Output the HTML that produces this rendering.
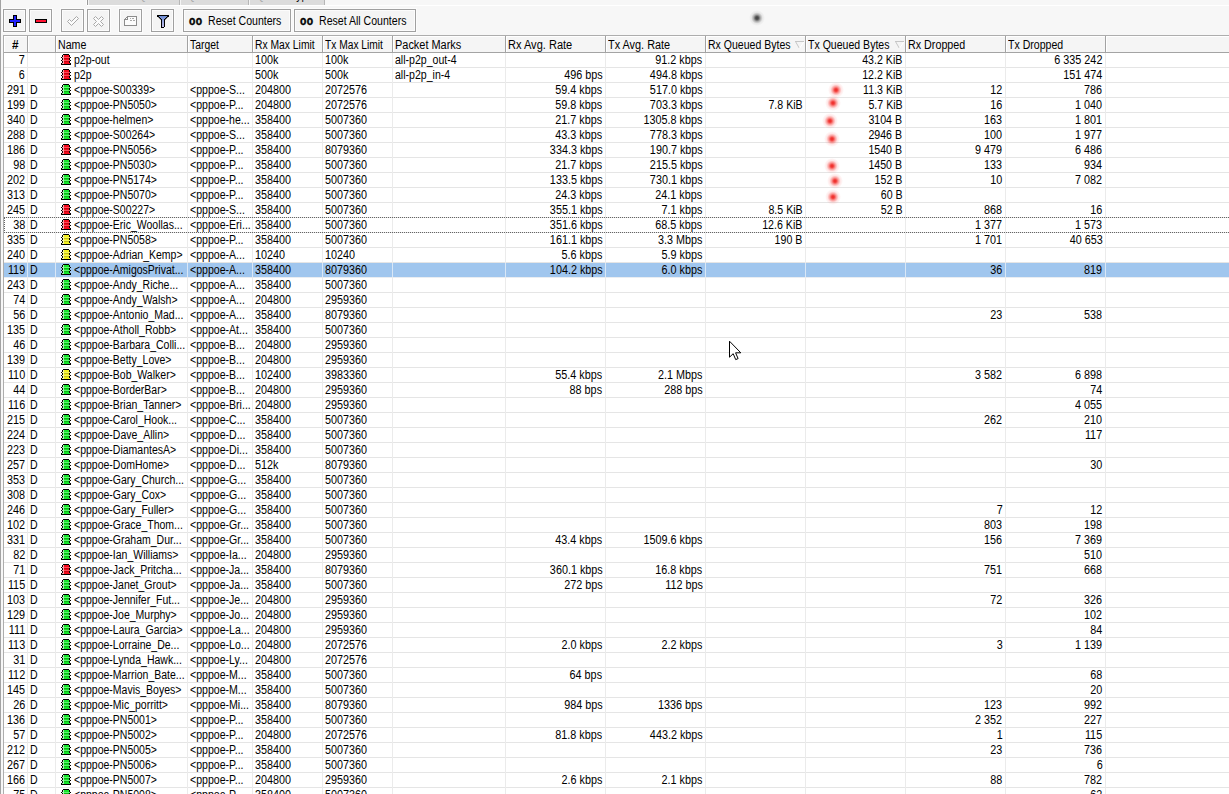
<!DOCTYPE html>
<html lang="en"><head><meta charset="utf-8"><title>Queue List</title>
<style>
*{margin:0;padding:0;box-sizing:border-box}
html,body{width:1229px;height:794px;overflow:hidden;background:#f7f7f7}
body{font-family:"Liberation Sans",sans-serif;font-size:12px;color:#000;position:relative}
#app{position:absolute;left:0;top:0;width:1229px;height:794px;overflow:hidden;background:#f7f7f7}
.edge{position:absolute;left:0;top:0;width:1px;height:794px;background:#a3a3a3}
.tabs{position:absolute;left:87px;top:0;height:5px;width:238px;background:#dcdcdc;overflow:hidden;border-left:1px solid #9a9a9a}
.tabw{position:absolute;left:86px;top:0;width:1px;height:5px;background:#fff}
.tab{position:absolute;top:-12px;height:17px;border-left:1px solid #f4f4f4;border-right:1px solid #b6b6b6;color:#111;line-height:15px;white-space:nowrap;overflow:hidden}
.hl{position:absolute;left:87px;top:5px;width:1142px;height:1px;background:#fff}
.btn{position:absolute;top:9px;height:23px;border:1px solid #a0a0a0;background:#f4f4f4;box-shadow:inset 0 0 0 1px #fcfcfc,0 0 0 1px rgba(255,255,255,.6)}
.btn svg{position:absolute;left:0;top:0}
.oo{position:absolute;left:4.9px;top:3px;font-weight:bold;font-size:13px;line-height:15px;letter-spacing:0.6px;transform:scaleX(0.8);transform-origin:0 78%;white-space:nowrap;-webkit-text-stroke:0.45px #000}
.btn .t{position:absolute;top:4px;line-height:15px;white-space:nowrap}
.sx{display:inline-block;transform:scaleX(0.88);white-space:nowrap}
.l .sx{transform-origin:0 50%}
.r .sx{transform-origin:100% 50%}
#tbl{position:absolute;left:3px;top:35px;width:1226px;height:759px;background:#fff;border-left:1px solid #adadad;border-top:1px solid #adadad}
#hdr{position:absolute;left:0;top:0;width:100%;height:17px;background:#f5f5f5;border-bottom:1px solid #a4a4a4;box-shadow:inset 0 1px 0 #fff}
.h{position:absolute;top:0;height:16px;line-height:16px;white-space:nowrap;border-right:1px solid #a2a2a2;box-shadow:inset 1px 0 0 #fff;padding-left:2px;padding-top:1px}
.vs{position:absolute;top:17px;width:1px;height:794px;background:#ebebeb}
.row{position:absolute;left:0;width:100%;height:15px;border-bottom:1px solid #e5e5e5}
.row.sel{background:#a0c6ee;border-bottom-color:#e9edf2}
.vsel{position:absolute;top:0;width:1px;height:14px;background:#d9e7f6}
.c{position:absolute;top:0;height:14px;line-height:15px;white-space:nowrap;overflow:visible}
.c.l{text-align:left}
.c.r{text-align:right}
.s0 .sx{transform:scaleX(0.9)}
.s1 .sx{transform:scaleX(0.88)}
.s2 .sx{transform:scaleX(0.875)}
.s3 .sx{transform:scaleX(0.88)}
.s4 .sx{transform:scaleX(0.9)}
.s5 .sx{transform:scaleX(0.9)}
.s6 .sx{transform:scaleX(0.88)}
.s7 .sx{transform:scaleX(0.9)}
.s8 .sx{transform:scaleX(0.9)}
.s9 .sx{transform:scaleX(0.885)}
.s10 .sx{transform:scaleX(0.885)}
.s11 .sx{transform:scaleX(0.9)}
.s12 .sx{transform:scaleX(0.9)}

.ic{position:absolute;top:1px;width:10px;height:11px}
.focus{position:absolute;pointer-events:none}
.dot{position:absolute;border-radius:50%}
</style></head>
<body><div id="app">
<div class="edge"></div>
<div class="tabs"><div class="tab l" style="left:0;width:92px"><span class="sx" style="margin-left:5px">Interface <span style="color:#aaa">Q</span>ueues</span></div><div class="tab l" style="left:92px;width:69px"><span class="sx" style="margin-left:6px"><span style="color:#aaa">Q</span>ueue Tree</span></div><div class="tab l" style="left:161px;width:76px"><span class="sx" style="margin-left:6px"><span style="color:#aaa">Q</span>ueue Types</span></div></div>
<div class="tabw"></div><div class="hl"></div>
<svg width="0" height="0" style="position:absolute"><defs><symbol id="qg" viewBox="0 0 10 11">
<path fill="#000" d="M2 0h6v1h-6zM1 1h1v2h-1zM8 1h1v2h-1zM0 3h1v1h-1zM9 3h1v1h-1zM1 4h1v2h-1zM8 4h1v2h-1zM0 6h1v1h-1zM9 6h1v1h-1zM1 7h1v2h-1zM8 7h1v2h-1zM0 9h1v1h-1zM9 9h1v1h-1zM0 10h10v1h-10z"/>
<path fill="#14e42a" d="M2 1h6v2h-6zM1 3h8v1h-8zM2 4h6v2h-6zM1 6h8v1h-8zM2 7h6v2h-6zM1 9h8v1h-8z"/>
<path fill="#62f274" d="M3 3h6v1h-6zM3 6h6v1h-6z"/>
<path fill="#06bc14" d="M3 4h5v1h-5zM3 7h5v1h-5z"/>
<path fill="#a4f6ae" d="M2 1h1v9h-1zM1 3h1v1h-1zM1 6h1v1h-1zM1 9h1v1h-1z"/>
</symbol><symbol id="qr" viewBox="0 0 10 11">
<path fill="#000" d="M2 0h6v1h-6zM1 1h1v2h-1zM8 1h1v2h-1zM0 3h1v1h-1zM9 3h1v1h-1zM1 4h1v2h-1zM8 4h1v2h-1zM0 6h1v1h-1zM9 6h1v1h-1zM1 7h1v2h-1zM8 7h1v2h-1zM0 9h1v1h-1zM9 9h1v1h-1zM0 10h10v1h-10z"/>
<path fill="#f20a1c" d="M2 1h6v2h-6zM1 3h8v1h-8zM2 4h6v2h-6zM1 6h8v1h-8zM2 7h6v2h-6zM1 9h8v1h-8z"/>
<path fill="#fb4a5a" d="M3 3h6v1h-6zM3 6h6v1h-6z"/>
<path fill="#cc0010" d="M3 4h5v1h-5zM3 7h5v1h-5z"/>
<path fill="#fda0a6" d="M2 1h1v9h-1zM1 3h1v1h-1zM1 6h1v1h-1zM1 9h1v1h-1z"/>
</symbol><symbol id="qy" viewBox="0 0 10 11">
<path fill="#000" d="M2 0h6v1h-6zM1 1h1v2h-1zM8 1h1v2h-1zM0 3h1v1h-1zM9 3h1v1h-1zM1 4h1v2h-1zM8 4h1v2h-1zM0 6h1v1h-1zM9 6h1v1h-1zM1 7h1v2h-1zM8 7h1v2h-1zM0 9h1v1h-1zM9 9h1v1h-1zM0 10h10v1h-10z"/>
<path fill="#f2f01e" d="M2 1h6v2h-6zM1 3h8v1h-8zM2 4h6v2h-6zM1 6h8v1h-8zM2 7h6v2h-6zM1 9h8v1h-8z"/>
<path fill="#f7f55c" d="M3 3h6v1h-6zM3 6h6v1h-6z"/>
<path fill="#c6c01c" d="M3 4h5v1h-5zM3 7h5v1h-5z"/>
<path fill="#fafaa4" d="M2 1h1v9h-1zM1 3h1v1h-1zM1 6h1v1h-1zM1 9h1v1h-1z"/>
</symbol></defs></svg>
<div class="btn" style="left:3px;width:23px"><svg width="21" height="21" viewBox="0 0 21 21" shape-rendering="crispEdges"><path fill="#000" d="M9 5h4v4h4v4h-4v4h-4v-4h-4v-4h4z"/><path fill="#2222ff" d="M10 6h2v4h4v2h-4v4h-2v-4h-4v-2h4z"/></svg></div>
<div class="btn" style="left:29px;width:23px"><svg width="21" height="21" viewBox="0 0 21 21" shape-rendering="crispEdges"><path fill="#000" d="M5 9h12v4h-12z"/><path fill="#ff1030" d="M6 10h10v2h-10z"/></svg></div>
<div class="btn" style="left:61px;width:23px"><svg width="21" height="21" viewBox="0 0 21 21"><path fill="#fbfbfb" stroke="#a8a8a8" stroke-width="1" d="M5.5 11.5L7.5 9.5L9.5 11.5L14.5 6.5L16.5 8.5L9.5 15.5z"/></svg></div>
<div class="btn" style="left:87px;width:23px"><svg width="21" height="21" viewBox="0 0 21 21"><path fill="#fbfbfb" stroke="#a8a8a8" stroke-width="1" d="M5.5 8.5L7.5 6.5L10.5 9.5L13.5 6.5L15.5 8.5L12.5 11.5L15.5 14.5L13.5 16.5L10.5 13.5L7.5 16.5L5.5 14.5L8.5 11.5z"/></svg></div>
<div class="btn" style="left:119px;width:23px"><svg width="21" height="21" viewBox="0 0 21 21" shape-rendering="crispEdges"><path fill="#fcfcfc" d="M7 6h10v10h-13v-7z"/><path fill="#8c8c8c" d="M7 6h10v1h-10zM16 6h1v10h-1zM4 15h13v1h-13zM4 9h1v7h-1zM4 9h4v1h-4zM7 6h1v4h-1zM5 8h1v1h-1zM6 7h1v1h-1z"/><path fill="#a8a8a8" d="M10 8h1v1h-1zM12 8h2v1h-2zM10 10h2v1h-2zM13 10h2v1h-2z"/></svg></div>
<div class="btn" style="left:151px;width:23px"><svg width="21" height="21" viewBox="0 0 21 21" shape-rendering="crispEdges"><defs><linearGradient id="fg" x1="0" y1="0" x2="0" y2="1"><stop offset="0" stop-color="#6c8cd4"/><stop offset="1" stop-color="#c4c0ea"/></linearGradient></defs><path fill="url(#fg)" d="M6 6h10v1h-1v1h-1v1h-1v1h-1v7h-2v-7h-1v-1h-1v-1h-1v-1h-1z"/><path fill="#000" d="M5 5h12v1h-12zM5 6h2v1h-2zM15 6h2v1h-2zM7 7h1v1h-1zM14 7h1v1h-1zM8 8h1v1h-1zM13 8h1v1h-1zM9 9h1v8h-1zM12 9h1v8h-1zM9 17h3v1h-3z"/><path fill="#000" fill-opacity=".45" d="M6 7h1v1h-1zM15 7h1v1h-1zM7 8h1v1h-1zM14 8h1v1h-1zM8 9h1v1h-1zM13 9h1v1h-1z"/></svg></div>
<div class="btn" style="left:183px;width:108px"><span class="oo">oo</span><div class="t l" style="left:23.5px"><span class="sx">Reset Counters</span></div></div>
<div class="btn" style="left:294px;width:122px"><span class="oo">oo</span><div class="t l" style="left:23.5px"><span class="sx">Reset All Counters</span></div></div>
<div class="dot" style="left:748.6px;top:9.5px;width:16px;height:16px;background:radial-gradient(circle closest-side,rgba(50,50,50,.95) 0,rgba(60,60,60,.85) 20%,rgba(90,90,90,.45) 45%,rgba(120,120,120,.12) 70%,rgba(128,128,128,0) 100%)"></div>
<div id="tbl">
<div class="row" style="top:17px"><div class="c r s0" style="left:0px;width:21px"><span class="sx">7</span></div><svg class="ic r" style="left:57px" shape-rendering="crispEdges"><use href="#qr"/></svg><div class="c l s2" style="left:70px"><span class="sx">p2p-out</span></div><div class="c l s4" style="left:251px"><span class="sx">100k</span></div><div class="c l s5" style="left:321px"><span class="sx">100k</span></div><div class="c l s6" style="left:391px"><span class="sx">all-p2p_out-4</span></div><div class="c r s8" style="left:602px;width:96.5px"><span class="sx">91.2 kbps</span></div><div class="c r s10" style="left:802px;width:96.5px"><span class="sx">43.2 KiB</span></div><div class="c r s12" style="left:1002px;width:96.5px"><span class="sx">6 335 242</span></div></div>
<div class="row" style="top:32px"><div class="c r s0" style="left:0px;width:21px"><span class="sx">6</span></div><svg class="ic r" style="left:57px" shape-rendering="crispEdges"><use href="#qr"/></svg><div class="c l s2" style="left:70px"><span class="sx">p2p</span></div><div class="c l s4" style="left:251px"><span class="sx">500k</span></div><div class="c l s5" style="left:321px"><span class="sx">500k</span></div><div class="c l s6" style="left:391px"><span class="sx">all-p2p_in-4</span></div><div class="c r s7" style="left:502px;width:96.5px"><span class="sx">496 bps</span></div><div class="c r s8" style="left:602px;width:96.5px"><span class="sx">494.8 kbps</span></div><div class="c r s10" style="left:802px;width:96.5px"><span class="sx">12.2 KiB</span></div><div class="c r s12" style="left:1002px;width:96.5px"><span class="sx">151 474</span></div></div>
<div class="row" style="top:47px"><div class="c r s0" style="left:0px;width:21px"><span class="sx">291</span></div><div class="c l s1" style="left:26px"><span class="sx">D</span></div><svg class="ic g" style="left:57px" shape-rendering="crispEdges"><use href="#qg"/></svg><div class="c l s2" style="left:70px"><span class="sx">&lt;pppoe-S00339&gt;</span></div><div class="c l s3" style="left:186px"><span class="sx">&lt;pppoe-S...</span></div><div class="c l s4" style="left:251px"><span class="sx">204800</span></div><div class="c l s5" style="left:321px"><span class="sx">2072576</span></div><div class="c r s7" style="left:502px;width:96.5px"><span class="sx">59.4 kbps</span></div><div class="c r s8" style="left:602px;width:96.5px"><span class="sx">517.0 kbps</span></div><div class="c r s10" style="left:802px;width:96.5px"><span class="sx">11.3 KiB</span></div><div class="c r s11" style="left:902px;width:96.5px"><span class="sx">12</span></div><div class="c r s12" style="left:1002px;width:96.5px"><span class="sx">786</span></div></div>
<div class="row" style="top:62px"><div class="c r s0" style="left:0px;width:21px"><span class="sx">199</span></div><div class="c l s1" style="left:26px"><span class="sx">D</span></div><svg class="ic g" style="left:57px" shape-rendering="crispEdges"><use href="#qg"/></svg><div class="c l s2" style="left:70px"><span class="sx">&lt;pppoe-PN5050&gt;</span></div><div class="c l s3" style="left:186px"><span class="sx">&lt;pppoe-P...</span></div><div class="c l s4" style="left:251px"><span class="sx">204800</span></div><div class="c l s5" style="left:321px"><span class="sx">2072576</span></div><div class="c r s7" style="left:502px;width:96.5px"><span class="sx">59.8 kbps</span></div><div class="c r s8" style="left:602px;width:96.5px"><span class="sx">703.3 kbps</span></div><div class="c r s9" style="left:702px;width:96.5px"><span class="sx">7.8 KiB</span></div><div class="c r s10" style="left:802px;width:96.5px"><span class="sx">5.7 KiB</span></div><div class="c r s11" style="left:902px;width:96.5px"><span class="sx">16</span></div><div class="c r s12" style="left:1002px;width:96.5px"><span class="sx">1 040</span></div></div>
<div class="row" style="top:77px"><div class="c r s0" style="left:0px;width:21px"><span class="sx">340</span></div><div class="c l s1" style="left:26px"><span class="sx">D</span></div><svg class="ic g" style="left:57px" shape-rendering="crispEdges"><use href="#qg"/></svg><div class="c l s2" style="left:70px"><span class="sx">&lt;pppoe-helmen&gt;</span></div><div class="c l s3" style="left:186px"><span class="sx">&lt;pppoe-he...</span></div><div class="c l s4" style="left:251px"><span class="sx">358400</span></div><div class="c l s5" style="left:321px"><span class="sx">5007360</span></div><div class="c r s7" style="left:502px;width:96.5px"><span class="sx">21.7 kbps</span></div><div class="c r s8" style="left:602px;width:96.5px"><span class="sx">1305.8 kbps</span></div><div class="c r s10" style="left:802px;width:96.5px"><span class="sx">3104 B</span></div><div class="c r s11" style="left:902px;width:96.5px"><span class="sx">163</span></div><div class="c r s12" style="left:1002px;width:96.5px"><span class="sx">1 801</span></div></div>
<div class="row" style="top:92px"><div class="c r s0" style="left:0px;width:21px"><span class="sx">288</span></div><div class="c l s1" style="left:26px"><span class="sx">D</span></div><svg class="ic g" style="left:57px" shape-rendering="crispEdges"><use href="#qg"/></svg><div class="c l s2" style="left:70px"><span class="sx">&lt;pppoe-S00264&gt;</span></div><div class="c l s3" style="left:186px"><span class="sx">&lt;pppoe-S...</span></div><div class="c l s4" style="left:251px"><span class="sx">358400</span></div><div class="c l s5" style="left:321px"><span class="sx">5007360</span></div><div class="c r s7" style="left:502px;width:96.5px"><span class="sx">43.3 kbps</span></div><div class="c r s8" style="left:602px;width:96.5px"><span class="sx">778.3 kbps</span></div><div class="c r s10" style="left:802px;width:96.5px"><span class="sx">2946 B</span></div><div class="c r s11" style="left:902px;width:96.5px"><span class="sx">100</span></div><div class="c r s12" style="left:1002px;width:96.5px"><span class="sx">1 977</span></div></div>
<div class="row" style="top:107px"><div class="c r s0" style="left:0px;width:21px"><span class="sx">186</span></div><div class="c l s1" style="left:26px"><span class="sx">D</span></div><svg class="ic r" style="left:57px" shape-rendering="crispEdges"><use href="#qr"/></svg><div class="c l s2" style="left:70px"><span class="sx">&lt;pppoe-PN5056&gt;</span></div><div class="c l s3" style="left:186px"><span class="sx">&lt;pppoe-P...</span></div><div class="c l s4" style="left:251px"><span class="sx">358400</span></div><div class="c l s5" style="left:321px"><span class="sx">8079360</span></div><div class="c r s7" style="left:502px;width:96.5px"><span class="sx">334.3 kbps</span></div><div class="c r s8" style="left:602px;width:96.5px"><span class="sx">190.7 kbps</span></div><div class="c r s10" style="left:802px;width:96.5px"><span class="sx">1540 B</span></div><div class="c r s11" style="left:902px;width:96.5px"><span class="sx">9 479</span></div><div class="c r s12" style="left:1002px;width:96.5px"><span class="sx">6 486</span></div></div>
<div class="row" style="top:122px"><div class="c r s0" style="left:0px;width:21px"><span class="sx">98</span></div><div class="c l s1" style="left:26px"><span class="sx">D</span></div><svg class="ic g" style="left:57px" shape-rendering="crispEdges"><use href="#qg"/></svg><div class="c l s2" style="left:70px"><span class="sx">&lt;pppoe-PN5030&gt;</span></div><div class="c l s3" style="left:186px"><span class="sx">&lt;pppoe-P...</span></div><div class="c l s4" style="left:251px"><span class="sx">358400</span></div><div class="c l s5" style="left:321px"><span class="sx">5007360</span></div><div class="c r s7" style="left:502px;width:96.5px"><span class="sx">21.7 kbps</span></div><div class="c r s8" style="left:602px;width:96.5px"><span class="sx">215.5 kbps</span></div><div class="c r s10" style="left:802px;width:96.5px"><span class="sx">1450 B</span></div><div class="c r s11" style="left:902px;width:96.5px"><span class="sx">133</span></div><div class="c r s12" style="left:1002px;width:96.5px"><span class="sx">934</span></div></div>
<div class="row" style="top:137px"><div class="c r s0" style="left:0px;width:21px"><span class="sx">202</span></div><div class="c l s1" style="left:26px"><span class="sx">D</span></div><svg class="ic g" style="left:57px" shape-rendering="crispEdges"><use href="#qg"/></svg><div class="c l s2" style="left:70px"><span class="sx">&lt;pppoe-PN5174&gt;</span></div><div class="c l s3" style="left:186px"><span class="sx">&lt;pppoe-P...</span></div><div class="c l s4" style="left:251px"><span class="sx">358400</span></div><div class="c l s5" style="left:321px"><span class="sx">5007360</span></div><div class="c r s7" style="left:502px;width:96.5px"><span class="sx">133.5 kbps</span></div><div class="c r s8" style="left:602px;width:96.5px"><span class="sx">730.1 kbps</span></div><div class="c r s10" style="left:802px;width:96.5px"><span class="sx">152 B</span></div><div class="c r s11" style="left:902px;width:96.5px"><span class="sx">10</span></div><div class="c r s12" style="left:1002px;width:96.5px"><span class="sx">7 082</span></div></div>
<div class="row" style="top:152px"><div class="c r s0" style="left:0px;width:21px"><span class="sx">313</span></div><div class="c l s1" style="left:26px"><span class="sx">D</span></div><svg class="ic g" style="left:57px" shape-rendering="crispEdges"><use href="#qg"/></svg><div class="c l s2" style="left:70px"><span class="sx">&lt;pppoe-PN5070&gt;</span></div><div class="c l s3" style="left:186px"><span class="sx">&lt;pppoe-P...</span></div><div class="c l s4" style="left:251px"><span class="sx">358400</span></div><div class="c l s5" style="left:321px"><span class="sx">5007360</span></div><div class="c r s7" style="left:502px;width:96.5px"><span class="sx">24.3 kbps</span></div><div class="c r s8" style="left:602px;width:96.5px"><span class="sx">24.1 kbps</span></div><div class="c r s10" style="left:802px;width:96.5px"><span class="sx">60 B</span></div></div>
<div class="row" style="top:167px"><div class="c r s0" style="left:0px;width:21px"><span class="sx">245</span></div><div class="c l s1" style="left:26px"><span class="sx">D</span></div><svg class="ic r" style="left:57px" shape-rendering="crispEdges"><use href="#qr"/></svg><div class="c l s2" style="left:70px"><span class="sx">&lt;pppoe-S00227&gt;</span></div><div class="c l s3" style="left:186px"><span class="sx">&lt;pppoe-S...</span></div><div class="c l s4" style="left:251px"><span class="sx">358400</span></div><div class="c l s5" style="left:321px"><span class="sx">5007360</span></div><div class="c r s7" style="left:502px;width:96.5px"><span class="sx">355.1 kbps</span></div><div class="c r s8" style="left:602px;width:96.5px"><span class="sx">7.1 kbps</span></div><div class="c r s9" style="left:702px;width:96.5px"><span class="sx">8.5 KiB</span></div><div class="c r s10" style="left:802px;width:96.5px"><span class="sx">52 B</span></div><div class="c r s11" style="left:902px;width:96.5px"><span class="sx">868</span></div><div class="c r s12" style="left:1002px;width:96.5px"><span class="sx">16</span></div></div>
<div class="row" style="top:182px"><div class="c r s0" style="left:0px;width:21px"><span class="sx">38</span></div><div class="c l s1" style="left:26px"><span class="sx">D</span></div><svg class="ic r" style="left:57px" shape-rendering="crispEdges"><use href="#qr"/></svg><div class="c l s2" style="left:70px"><span class="sx">&lt;pppoe-Eric_Woollas...</span></div><div class="c l s3" style="left:186px"><span class="sx">&lt;pppoe-Eri...</span></div><div class="c l s4" style="left:251px"><span class="sx">358400</span></div><div class="c l s5" style="left:321px"><span class="sx">5007360</span></div><div class="c r s7" style="left:502px;width:96.5px"><span class="sx">351.6 kbps</span></div><div class="c r s8" style="left:602px;width:96.5px"><span class="sx">68.5 kbps</span></div><div class="c r s9" style="left:702px;width:96.5px"><span class="sx">12.6 KiB</span></div><div class="c r s11" style="left:902px;width:96.5px"><span class="sx">1 377</span></div><div class="c r s12" style="left:1002px;width:96.5px"><span class="sx">1 573</span></div></div>
<div class="row" style="top:197px"><div class="c r s0" style="left:0px;width:21px"><span class="sx">335</span></div><div class="c l s1" style="left:26px"><span class="sx">D</span></div><svg class="ic y" style="left:57px" shape-rendering="crispEdges"><use href="#qy"/></svg><div class="c l s2" style="left:70px"><span class="sx">&lt;pppoe-PN5058&gt;</span></div><div class="c l s3" style="left:186px"><span class="sx">&lt;pppoe-P...</span></div><div class="c l s4" style="left:251px"><span class="sx">358400</span></div><div class="c l s5" style="left:321px"><span class="sx">5007360</span></div><div class="c r s7" style="left:502px;width:96.5px"><span class="sx">161.1 kbps</span></div><div class="c r s8" style="left:602px;width:96.5px"><span class="sx">3.3 Mbps</span></div><div class="c r s9" style="left:702px;width:96.5px"><span class="sx">190 B</span></div><div class="c r s11" style="left:902px;width:96.5px"><span class="sx">1 701</span></div><div class="c r s12" style="left:1002px;width:96.5px"><span class="sx">40 653</span></div></div>
<div class="row" style="top:212px"><div class="c r s0" style="left:0px;width:21px"><span class="sx">240</span></div><div class="c l s1" style="left:26px"><span class="sx">D</span></div><svg class="ic y" style="left:57px" shape-rendering="crispEdges"><use href="#qy"/></svg><div class="c l s2" style="left:70px"><span class="sx">&lt;pppoe-Adrian_Kemp&gt;</span></div><div class="c l s3" style="left:186px"><span class="sx">&lt;pppoe-A...</span></div><div class="c l s4" style="left:251px"><span class="sx">10240</span></div><div class="c l s5" style="left:321px"><span class="sx">10240</span></div><div class="c r s7" style="left:502px;width:96.5px"><span class="sx">5.6 kbps</span></div><div class="c r s8" style="left:602px;width:96.5px"><span class="sx">5.9 kbps</span></div></div>
<div class="row sel" style="top:227px"><div class="c r s0" style="left:0px;width:21px"><span class="sx">119</span></div><div class="c l s1" style="left:26px"><span class="sx">D</span></div><svg class="ic g" style="left:57px" shape-rendering="crispEdges"><use href="#qg"/></svg><div class="c l s2" style="left:70px"><span class="sx">&lt;pppoe-AmigosPrivat...</span></div><div class="c l s3" style="left:186px"><span class="sx">&lt;pppoe-A...</span></div><div class="c l s4" style="left:251px"><span class="sx">358400</span></div><div class="c l s5" style="left:321px"><span class="sx">8079360</span></div><div class="c r s7" style="left:502px;width:96.5px"><span class="sx">104.2 kbps</span></div><div class="c r s8" style="left:602px;width:96.5px"><span class="sx">6.0 kbps</span></div><div class="c r s11" style="left:902px;width:96.5px"><span class="sx">36</span></div><div class="c r s12" style="left:1002px;width:96.5px"><span class="sx">819</span></div></div>
<div class="row" style="top:242px"><div class="c r s0" style="left:0px;width:21px"><span class="sx">243</span></div><div class="c l s1" style="left:26px"><span class="sx">D</span></div><svg class="ic g" style="left:57px" shape-rendering="crispEdges"><use href="#qg"/></svg><div class="c l s2" style="left:70px"><span class="sx">&lt;pppoe-Andy_Riche...</span></div><div class="c l s3" style="left:186px"><span class="sx">&lt;pppoe-A...</span></div><div class="c l s4" style="left:251px"><span class="sx">358400</span></div><div class="c l s5" style="left:321px"><span class="sx">5007360</span></div></div>
<div class="row" style="top:257px"><div class="c r s0" style="left:0px;width:21px"><span class="sx">74</span></div><div class="c l s1" style="left:26px"><span class="sx">D</span></div><svg class="ic g" style="left:57px" shape-rendering="crispEdges"><use href="#qg"/></svg><div class="c l s2" style="left:70px"><span class="sx">&lt;pppoe-Andy_Walsh&gt;</span></div><div class="c l s3" style="left:186px"><span class="sx">&lt;pppoe-A...</span></div><div class="c l s4" style="left:251px"><span class="sx">204800</span></div><div class="c l s5" style="left:321px"><span class="sx">2959360</span></div></div>
<div class="row" style="top:272px"><div class="c r s0" style="left:0px;width:21px"><span class="sx">56</span></div><div class="c l s1" style="left:26px"><span class="sx">D</span></div><svg class="ic g" style="left:57px" shape-rendering="crispEdges"><use href="#qg"/></svg><div class="c l s2" style="left:70px"><span class="sx">&lt;pppoe-Antonio_Mad...</span></div><div class="c l s3" style="left:186px"><span class="sx">&lt;pppoe-A...</span></div><div class="c l s4" style="left:251px"><span class="sx">358400</span></div><div class="c l s5" style="left:321px"><span class="sx">8079360</span></div><div class="c r s11" style="left:902px;width:96.5px"><span class="sx">23</span></div><div class="c r s12" style="left:1002px;width:96.5px"><span class="sx">538</span></div></div>
<div class="row" style="top:287px"><div class="c r s0" style="left:0px;width:21px"><span class="sx">135</span></div><div class="c l s1" style="left:26px"><span class="sx">D</span></div><svg class="ic g" style="left:57px" shape-rendering="crispEdges"><use href="#qg"/></svg><div class="c l s2" style="left:70px"><span class="sx">&lt;pppoe-Atholl_Robb&gt;</span></div><div class="c l s3" style="left:186px"><span class="sx">&lt;pppoe-At...</span></div><div class="c l s4" style="left:251px"><span class="sx">358400</span></div><div class="c l s5" style="left:321px"><span class="sx">5007360</span></div></div>
<div class="row" style="top:302px"><div class="c r s0" style="left:0px;width:21px"><span class="sx">46</span></div><div class="c l s1" style="left:26px"><span class="sx">D</span></div><svg class="ic g" style="left:57px" shape-rendering="crispEdges"><use href="#qg"/></svg><div class="c l s2" style="left:70px"><span class="sx">&lt;pppoe-Barbara_Colli...</span></div><div class="c l s3" style="left:186px"><span class="sx">&lt;pppoe-B...</span></div><div class="c l s4" style="left:251px"><span class="sx">204800</span></div><div class="c l s5" style="left:321px"><span class="sx">2959360</span></div></div>
<div class="row" style="top:317px"><div class="c r s0" style="left:0px;width:21px"><span class="sx">139</span></div><div class="c l s1" style="left:26px"><span class="sx">D</span></div><svg class="ic g" style="left:57px" shape-rendering="crispEdges"><use href="#qg"/></svg><div class="c l s2" style="left:70px"><span class="sx">&lt;pppoe-Betty_Love&gt;</span></div><div class="c l s3" style="left:186px"><span class="sx">&lt;pppoe-B...</span></div><div class="c l s4" style="left:251px"><span class="sx">204800</span></div><div class="c l s5" style="left:321px"><span class="sx">2959360</span></div></div>
<div class="row" style="top:332px"><div class="c r s0" style="left:0px;width:21px"><span class="sx">110</span></div><div class="c l s1" style="left:26px"><span class="sx">D</span></div><svg class="ic y" style="left:57px" shape-rendering="crispEdges"><use href="#qy"/></svg><div class="c l s2" style="left:70px"><span class="sx">&lt;pppoe-Bob_Walker&gt;</span></div><div class="c l s3" style="left:186px"><span class="sx">&lt;pppoe-B...</span></div><div class="c l s4" style="left:251px"><span class="sx">102400</span></div><div class="c l s5" style="left:321px"><span class="sx">3983360</span></div><div class="c r s7" style="left:502px;width:96.5px"><span class="sx">55.4 kbps</span></div><div class="c r s8" style="left:602px;width:96.5px"><span class="sx">2.1 Mbps</span></div><div class="c r s11" style="left:902px;width:96.5px"><span class="sx">3 582</span></div><div class="c r s12" style="left:1002px;width:96.5px"><span class="sx">6 898</span></div></div>
<div class="row" style="top:347px"><div class="c r s0" style="left:0px;width:21px"><span class="sx">44</span></div><div class="c l s1" style="left:26px"><span class="sx">D</span></div><svg class="ic g" style="left:57px" shape-rendering="crispEdges"><use href="#qg"/></svg><div class="c l s2" style="left:70px"><span class="sx">&lt;pppoe-BorderBar&gt;</span></div><div class="c l s3" style="left:186px"><span class="sx">&lt;pppoe-B...</span></div><div class="c l s4" style="left:251px"><span class="sx">204800</span></div><div class="c l s5" style="left:321px"><span class="sx">2959360</span></div><div class="c r s7" style="left:502px;width:96.5px"><span class="sx">88 bps</span></div><div class="c r s8" style="left:602px;width:96.5px"><span class="sx">288 bps</span></div><div class="c r s12" style="left:1002px;width:96.5px"><span class="sx">74</span></div></div>
<div class="row" style="top:362px"><div class="c r s0" style="left:0px;width:21px"><span class="sx">116</span></div><div class="c l s1" style="left:26px"><span class="sx">D</span></div><svg class="ic g" style="left:57px" shape-rendering="crispEdges"><use href="#qg"/></svg><div class="c l s2" style="left:70px"><span class="sx">&lt;pppoe-Brian_Tanner&gt;</span></div><div class="c l s3" style="left:186px"><span class="sx">&lt;pppoe-Bri...</span></div><div class="c l s4" style="left:251px"><span class="sx">204800</span></div><div class="c l s5" style="left:321px"><span class="sx">2959360</span></div><div class="c r s12" style="left:1002px;width:96.5px"><span class="sx">4 055</span></div></div>
<div class="row" style="top:377px"><div class="c r s0" style="left:0px;width:21px"><span class="sx">215</span></div><div class="c l s1" style="left:26px"><span class="sx">D</span></div><svg class="ic g" style="left:57px" shape-rendering="crispEdges"><use href="#qg"/></svg><div class="c l s2" style="left:70px"><span class="sx">&lt;pppoe-Carol_Hook...</span></div><div class="c l s3" style="left:186px"><span class="sx">&lt;pppoe-C...</span></div><div class="c l s4" style="left:251px"><span class="sx">358400</span></div><div class="c l s5" style="left:321px"><span class="sx">5007360</span></div><div class="c r s11" style="left:902px;width:96.5px"><span class="sx">262</span></div><div class="c r s12" style="left:1002px;width:96.5px"><span class="sx">210</span></div></div>
<div class="row" style="top:392px"><div class="c r s0" style="left:0px;width:21px"><span class="sx">224</span></div><div class="c l s1" style="left:26px"><span class="sx">D</span></div><svg class="ic g" style="left:57px" shape-rendering="crispEdges"><use href="#qg"/></svg><div class="c l s2" style="left:70px"><span class="sx">&lt;pppoe-Dave_Allin&gt;</span></div><div class="c l s3" style="left:186px"><span class="sx">&lt;pppoe-D...</span></div><div class="c l s4" style="left:251px"><span class="sx">358400</span></div><div class="c l s5" style="left:321px"><span class="sx">5007360</span></div><div class="c r s12" style="left:1002px;width:96.5px"><span class="sx">117</span></div></div>
<div class="row" style="top:407px"><div class="c r s0" style="left:0px;width:21px"><span class="sx">223</span></div><div class="c l s1" style="left:26px"><span class="sx">D</span></div><svg class="ic g" style="left:57px" shape-rendering="crispEdges"><use href="#qg"/></svg><div class="c l s2" style="left:70px"><span class="sx">&lt;pppoe-DiamantesA&gt;</span></div><div class="c l s3" style="left:186px"><span class="sx">&lt;pppoe-Di...</span></div><div class="c l s4" style="left:251px"><span class="sx">358400</span></div><div class="c l s5" style="left:321px"><span class="sx">5007360</span></div></div>
<div class="row" style="top:422px"><div class="c r s0" style="left:0px;width:21px"><span class="sx">257</span></div><div class="c l s1" style="left:26px"><span class="sx">D</span></div><svg class="ic g" style="left:57px" shape-rendering="crispEdges"><use href="#qg"/></svg><div class="c l s2" style="left:70px"><span class="sx">&lt;pppoe-DomHome&gt;</span></div><div class="c l s3" style="left:186px"><span class="sx">&lt;pppoe-D...</span></div><div class="c l s4" style="left:251px"><span class="sx">512k</span></div><div class="c l s5" style="left:321px"><span class="sx">8079360</span></div><div class="c r s12" style="left:1002px;width:96.5px"><span class="sx">30</span></div></div>
<div class="row" style="top:437px"><div class="c r s0" style="left:0px;width:21px"><span class="sx">353</span></div><div class="c l s1" style="left:26px"><span class="sx">D</span></div><svg class="ic g" style="left:57px" shape-rendering="crispEdges"><use href="#qg"/></svg><div class="c l s2" style="left:70px"><span class="sx">&lt;pppoe-Gary_Church...</span></div><div class="c l s3" style="left:186px"><span class="sx">&lt;pppoe-G...</span></div><div class="c l s4" style="left:251px"><span class="sx">358400</span></div><div class="c l s5" style="left:321px"><span class="sx">5007360</span></div></div>
<div class="row" style="top:452px"><div class="c r s0" style="left:0px;width:21px"><span class="sx">308</span></div><div class="c l s1" style="left:26px"><span class="sx">D</span></div><svg class="ic g" style="left:57px" shape-rendering="crispEdges"><use href="#qg"/></svg><div class="c l s2" style="left:70px"><span class="sx">&lt;pppoe-Gary_Cox&gt;</span></div><div class="c l s3" style="left:186px"><span class="sx">&lt;pppoe-G...</span></div><div class="c l s4" style="left:251px"><span class="sx">358400</span></div><div class="c l s5" style="left:321px"><span class="sx">5007360</span></div></div>
<div class="row" style="top:467px"><div class="c r s0" style="left:0px;width:21px"><span class="sx">246</span></div><div class="c l s1" style="left:26px"><span class="sx">D</span></div><svg class="ic g" style="left:57px" shape-rendering="crispEdges"><use href="#qg"/></svg><div class="c l s2" style="left:70px"><span class="sx">&lt;pppoe-Gary_Fuller&gt;</span></div><div class="c l s3" style="left:186px"><span class="sx">&lt;pppoe-G...</span></div><div class="c l s4" style="left:251px"><span class="sx">358400</span></div><div class="c l s5" style="left:321px"><span class="sx">5007360</span></div><div class="c r s11" style="left:902px;width:96.5px"><span class="sx">7</span></div><div class="c r s12" style="left:1002px;width:96.5px"><span class="sx">12</span></div></div>
<div class="row" style="top:482px"><div class="c r s0" style="left:0px;width:21px"><span class="sx">102</span></div><div class="c l s1" style="left:26px"><span class="sx">D</span></div><svg class="ic g" style="left:57px" shape-rendering="crispEdges"><use href="#qg"/></svg><div class="c l s2" style="left:70px"><span class="sx">&lt;pppoe-Grace_Thom...</span></div><div class="c l s3" style="left:186px"><span class="sx">&lt;pppoe-Gr...</span></div><div class="c l s4" style="left:251px"><span class="sx">358400</span></div><div class="c l s5" style="left:321px"><span class="sx">5007360</span></div><div class="c r s11" style="left:902px;width:96.5px"><span class="sx">803</span></div><div class="c r s12" style="left:1002px;width:96.5px"><span class="sx">198</span></div></div>
<div class="row" style="top:497px"><div class="c r s0" style="left:0px;width:21px"><span class="sx">331</span></div><div class="c l s1" style="left:26px"><span class="sx">D</span></div><svg class="ic g" style="left:57px" shape-rendering="crispEdges"><use href="#qg"/></svg><div class="c l s2" style="left:70px"><span class="sx">&lt;pppoe-Graham_Dur...</span></div><div class="c l s3" style="left:186px"><span class="sx">&lt;pppoe-Gr...</span></div><div class="c l s4" style="left:251px"><span class="sx">358400</span></div><div class="c l s5" style="left:321px"><span class="sx">5007360</span></div><div class="c r s7" style="left:502px;width:96.5px"><span class="sx">43.4 kbps</span></div><div class="c r s8" style="left:602px;width:96.5px"><span class="sx">1509.6 kbps</span></div><div class="c r s11" style="left:902px;width:96.5px"><span class="sx">156</span></div><div class="c r s12" style="left:1002px;width:96.5px"><span class="sx">7 369</span></div></div>
<div class="row" style="top:512px"><div class="c r s0" style="left:0px;width:21px"><span class="sx">82</span></div><div class="c l s1" style="left:26px"><span class="sx">D</span></div><svg class="ic g" style="left:57px" shape-rendering="crispEdges"><use href="#qg"/></svg><div class="c l s2" style="left:70px"><span class="sx">&lt;pppoe-Ian_Williams&gt;</span></div><div class="c l s3" style="left:186px"><span class="sx">&lt;pppoe-Ia...</span></div><div class="c l s4" style="left:251px"><span class="sx">204800</span></div><div class="c l s5" style="left:321px"><span class="sx">2959360</span></div><div class="c r s12" style="left:1002px;width:96.5px"><span class="sx">510</span></div></div>
<div class="row" style="top:527px"><div class="c r s0" style="left:0px;width:21px"><span class="sx">71</span></div><div class="c l s1" style="left:26px"><span class="sx">D</span></div><svg class="ic r" style="left:57px" shape-rendering="crispEdges"><use href="#qr"/></svg><div class="c l s2" style="left:70px"><span class="sx">&lt;pppoe-Jack_Pritcha...</span></div><div class="c l s3" style="left:186px"><span class="sx">&lt;pppoe-Ja...</span></div><div class="c l s4" style="left:251px"><span class="sx">358400</span></div><div class="c l s5" style="left:321px"><span class="sx">8079360</span></div><div class="c r s7" style="left:502px;width:96.5px"><span class="sx">360.1 kbps</span></div><div class="c r s8" style="left:602px;width:96.5px"><span class="sx">16.8 kbps</span></div><div class="c r s11" style="left:902px;width:96.5px"><span class="sx">751</span></div><div class="c r s12" style="left:1002px;width:96.5px"><span class="sx">668</span></div></div>
<div class="row" style="top:542px"><div class="c r s0" style="left:0px;width:21px"><span class="sx">115</span></div><div class="c l s1" style="left:26px"><span class="sx">D</span></div><svg class="ic g" style="left:57px" shape-rendering="crispEdges"><use href="#qg"/></svg><div class="c l s2" style="left:70px"><span class="sx">&lt;pppoe-Janet_Grout&gt;</span></div><div class="c l s3" style="left:186px"><span class="sx">&lt;pppoe-Ja...</span></div><div class="c l s4" style="left:251px"><span class="sx">358400</span></div><div class="c l s5" style="left:321px"><span class="sx">5007360</span></div><div class="c r s7" style="left:502px;width:96.5px"><span class="sx">272 bps</span></div><div class="c r s8" style="left:602px;width:96.5px"><span class="sx">112 bps</span></div></div>
<div class="row" style="top:557px"><div class="c r s0" style="left:0px;width:21px"><span class="sx">103</span></div><div class="c l s1" style="left:26px"><span class="sx">D</span></div><svg class="ic g" style="left:57px" shape-rendering="crispEdges"><use href="#qg"/></svg><div class="c l s2" style="left:70px"><span class="sx">&lt;pppoe-Jennifer_Fut...</span></div><div class="c l s3" style="left:186px"><span class="sx">&lt;pppoe-Je...</span></div><div class="c l s4" style="left:251px"><span class="sx">204800</span></div><div class="c l s5" style="left:321px"><span class="sx">2959360</span></div><div class="c r s11" style="left:902px;width:96.5px"><span class="sx">72</span></div><div class="c r s12" style="left:1002px;width:96.5px"><span class="sx">326</span></div></div>
<div class="row" style="top:572px"><div class="c r s0" style="left:0px;width:21px"><span class="sx">129</span></div><div class="c l s1" style="left:26px"><span class="sx">D</span></div><svg class="ic g" style="left:57px" shape-rendering="crispEdges"><use href="#qg"/></svg><div class="c l s2" style="left:70px"><span class="sx">&lt;pppoe-Joe_Murphy&gt;</span></div><div class="c l s3" style="left:186px"><span class="sx">&lt;pppoe-Jo...</span></div><div class="c l s4" style="left:251px"><span class="sx">204800</span></div><div class="c l s5" style="left:321px"><span class="sx">2959360</span></div><div class="c r s12" style="left:1002px;width:96.5px"><span class="sx">102</span></div></div>
<div class="row" style="top:587px"><div class="c r s0" style="left:0px;width:21px"><span class="sx">111</span></div><div class="c l s1" style="left:26px"><span class="sx">D</span></div><svg class="ic g" style="left:57px" shape-rendering="crispEdges"><use href="#qg"/></svg><div class="c l s2" style="left:70px"><span class="sx">&lt;pppoe-Laura_Garcia&gt;</span></div><div class="c l s3" style="left:186px"><span class="sx">&lt;pppoe-La...</span></div><div class="c l s4" style="left:251px"><span class="sx">204800</span></div><div class="c l s5" style="left:321px"><span class="sx">2959360</span></div><div class="c r s12" style="left:1002px;width:96.5px"><span class="sx">84</span></div></div>
<div class="row" style="top:602px"><div class="c r s0" style="left:0px;width:21px"><span class="sx">113</span></div><div class="c l s1" style="left:26px"><span class="sx">D</span></div><svg class="ic g" style="left:57px" shape-rendering="crispEdges"><use href="#qg"/></svg><div class="c l s2" style="left:70px"><span class="sx">&lt;pppoe-Lorraine_De...</span></div><div class="c l s3" style="left:186px"><span class="sx">&lt;pppoe-Lo...</span></div><div class="c l s4" style="left:251px"><span class="sx">204800</span></div><div class="c l s5" style="left:321px"><span class="sx">2072576</span></div><div class="c r s7" style="left:502px;width:96.5px"><span class="sx">2.0 kbps</span></div><div class="c r s8" style="left:602px;width:96.5px"><span class="sx">2.2 kbps</span></div><div class="c r s11" style="left:902px;width:96.5px"><span class="sx">3</span></div><div class="c r s12" style="left:1002px;width:96.5px"><span class="sx">1 139</span></div></div>
<div class="row" style="top:617px"><div class="c r s0" style="left:0px;width:21px"><span class="sx">31</span></div><div class="c l s1" style="left:26px"><span class="sx">D</span></div><svg class="ic g" style="left:57px" shape-rendering="crispEdges"><use href="#qg"/></svg><div class="c l s2" style="left:70px"><span class="sx">&lt;pppoe-Lynda_Hawk...</span></div><div class="c l s3" style="left:186px"><span class="sx">&lt;pppoe-Ly...</span></div><div class="c l s4" style="left:251px"><span class="sx">204800</span></div><div class="c l s5" style="left:321px"><span class="sx">2072576</span></div></div>
<div class="row" style="top:632px"><div class="c r s0" style="left:0px;width:21px"><span class="sx">112</span></div><div class="c l s1" style="left:26px"><span class="sx">D</span></div><svg class="ic g" style="left:57px" shape-rendering="crispEdges"><use href="#qg"/></svg><div class="c l s2" style="left:70px"><span class="sx">&lt;pppoe-Marrion_Bate...</span></div><div class="c l s3" style="left:186px"><span class="sx">&lt;pppoe-M...</span></div><div class="c l s4" style="left:251px"><span class="sx">358400</span></div><div class="c l s5" style="left:321px"><span class="sx">5007360</span></div><div class="c r s7" style="left:502px;width:96.5px"><span class="sx">64 bps</span></div><div class="c r s12" style="left:1002px;width:96.5px"><span class="sx">68</span></div></div>
<div class="row" style="top:647px"><div class="c r s0" style="left:0px;width:21px"><span class="sx">145</span></div><div class="c l s1" style="left:26px"><span class="sx">D</span></div><svg class="ic g" style="left:57px" shape-rendering="crispEdges"><use href="#qg"/></svg><div class="c l s2" style="left:70px"><span class="sx">&lt;pppoe-Mavis_Boyes&gt;</span></div><div class="c l s3" style="left:186px"><span class="sx">&lt;pppoe-M...</span></div><div class="c l s4" style="left:251px"><span class="sx">358400</span></div><div class="c l s5" style="left:321px"><span class="sx">5007360</span></div><div class="c r s12" style="left:1002px;width:96.5px"><span class="sx">20</span></div></div>
<div class="row" style="top:662px"><div class="c r s0" style="left:0px;width:21px"><span class="sx">26</span></div><div class="c l s1" style="left:26px"><span class="sx">D</span></div><svg class="ic g" style="left:57px" shape-rendering="crispEdges"><use href="#qg"/></svg><div class="c l s2" style="left:70px"><span class="sx">&lt;pppoe-Mic_porritt&gt;</span></div><div class="c l s3" style="left:186px"><span class="sx">&lt;pppoe-Mi...</span></div><div class="c l s4" style="left:251px"><span class="sx">358400</span></div><div class="c l s5" style="left:321px"><span class="sx">8079360</span></div><div class="c r s7" style="left:502px;width:96.5px"><span class="sx">984 bps</span></div><div class="c r s8" style="left:602px;width:96.5px"><span class="sx">1336 bps</span></div><div class="c r s11" style="left:902px;width:96.5px"><span class="sx">123</span></div><div class="c r s12" style="left:1002px;width:96.5px"><span class="sx">992</span></div></div>
<div class="row" style="top:677px"><div class="c r s0" style="left:0px;width:21px"><span class="sx">136</span></div><div class="c l s1" style="left:26px"><span class="sx">D</span></div><svg class="ic g" style="left:57px" shape-rendering="crispEdges"><use href="#qg"/></svg><div class="c l s2" style="left:70px"><span class="sx">&lt;pppoe-PN5001&gt;</span></div><div class="c l s3" style="left:186px"><span class="sx">&lt;pppoe-P...</span></div><div class="c l s4" style="left:251px"><span class="sx">358400</span></div><div class="c l s5" style="left:321px"><span class="sx">5007360</span></div><div class="c r s11" style="left:902px;width:96.5px"><span class="sx">2 352</span></div><div class="c r s12" style="left:1002px;width:96.5px"><span class="sx">227</span></div></div>
<div class="row" style="top:692px"><div class="c r s0" style="left:0px;width:21px"><span class="sx">57</span></div><div class="c l s1" style="left:26px"><span class="sx">D</span></div><svg class="ic g" style="left:57px" shape-rendering="crispEdges"><use href="#qg"/></svg><div class="c l s2" style="left:70px"><span class="sx">&lt;pppoe-PN5002&gt;</span></div><div class="c l s3" style="left:186px"><span class="sx">&lt;pppoe-P...</span></div><div class="c l s4" style="left:251px"><span class="sx">204800</span></div><div class="c l s5" style="left:321px"><span class="sx">2072576</span></div><div class="c r s7" style="left:502px;width:96.5px"><span class="sx">81.8 kbps</span></div><div class="c r s8" style="left:602px;width:96.5px"><span class="sx">443.2 kbps</span></div><div class="c r s11" style="left:902px;width:96.5px"><span class="sx">1</span></div><div class="c r s12" style="left:1002px;width:96.5px"><span class="sx">115</span></div></div>
<div class="row" style="top:707px"><div class="c r s0" style="left:0px;width:21px"><span class="sx">212</span></div><div class="c l s1" style="left:26px"><span class="sx">D</span></div><svg class="ic g" style="left:57px" shape-rendering="crispEdges"><use href="#qg"/></svg><div class="c l s2" style="left:70px"><span class="sx">&lt;pppoe-PN5005&gt;</span></div><div class="c l s3" style="left:186px"><span class="sx">&lt;pppoe-P...</span></div><div class="c l s4" style="left:251px"><span class="sx">358400</span></div><div class="c l s5" style="left:321px"><span class="sx">5007360</span></div><div class="c r s11" style="left:902px;width:96.5px"><span class="sx">23</span></div><div class="c r s12" style="left:1002px;width:96.5px"><span class="sx">736</span></div></div>
<div class="row" style="top:722px"><div class="c r s0" style="left:0px;width:21px"><span class="sx">267</span></div><div class="c l s1" style="left:26px"><span class="sx">D</span></div><svg class="ic g" style="left:57px" shape-rendering="crispEdges"><use href="#qg"/></svg><div class="c l s2" style="left:70px"><span class="sx">&lt;pppoe-PN5006&gt;</span></div><div class="c l s3" style="left:186px"><span class="sx">&lt;pppoe-P...</span></div><div class="c l s4" style="left:251px"><span class="sx">358400</span></div><div class="c l s5" style="left:321px"><span class="sx">5007360</span></div><div class="c r s12" style="left:1002px;width:96.5px"><span class="sx">6</span></div></div>
<div class="row" style="top:737px"><div class="c r s0" style="left:0px;width:21px"><span class="sx">166</span></div><div class="c l s1" style="left:26px"><span class="sx">D</span></div><svg class="ic g" style="left:57px" shape-rendering="crispEdges"><use href="#qg"/></svg><div class="c l s2" style="left:70px"><span class="sx">&lt;pppoe-PN5007&gt;</span></div><div class="c l s3" style="left:186px"><span class="sx">&lt;pppoe-P...</span></div><div class="c l s4" style="left:251px"><span class="sx">204800</span></div><div class="c l s5" style="left:321px"><span class="sx">2959360</span></div><div class="c r s7" style="left:502px;width:96.5px"><span class="sx">2.6 kbps</span></div><div class="c r s8" style="left:602px;width:96.5px"><span class="sx">2.1 kbps</span></div><div class="c r s11" style="left:902px;width:96.5px"><span class="sx">88</span></div><div class="c r s12" style="left:1002px;width:96.5px"><span class="sx">782</span></div></div>
<div class="row" style="top:752px"><div class="c r s0" style="left:0px;width:21px"><span class="sx">75</span></div><div class="c l s1" style="left:26px"><span class="sx">D</span></div><svg class="ic g" style="left:57px" shape-rendering="crispEdges"><use href="#qg"/></svg><div class="c l s2" style="left:70px"><span class="sx">&lt;pppoe-PN5008&gt;</span></div><div class="c l s3" style="left:186px"><span class="sx">&lt;pppoe-P...</span></div><div class="c l s4" style="left:251px"><span class="sx">358400</span></div><div class="c l s5" style="left:321px"><span class="sx">5007360</span></div><div class="c r s12" style="left:1002px;width:96.5px"><span class="sx">62</span></div></div>
<div class="vs" style="left:23px"></div>
<div class="vs" style="left:51px"></div>
<div class="vs" style="left:183px"></div>
<div class="vs" style="left:248px"></div>
<div class="vs" style="left:318px"></div>
<div class="vs" style="left:388px"></div>
<div class="vs" style="left:501px"></div>
<div class="vs" style="left:601px"></div>
<div class="vs" style="left:701px"></div>
<div class="vs" style="left:801px"></div>
<div class="vs" style="left:901px"></div>
<div class="vs" style="left:1001px"></div>
<div class="vs" style="left:1101px"></div>
<div class="vsel" style="left:23px;top:227px"></div>
<div class="vsel" style="left:51px;top:227px"></div>
<div class="vsel" style="left:183px;top:227px"></div>
<div class="vsel" style="left:248px;top:227px"></div>
<div class="vsel" style="left:318px;top:227px"></div>
<div class="vsel" style="left:388px;top:227px"></div>
<div class="vsel" style="left:501px;top:227px"></div>
<div class="vsel" style="left:601px;top:227px"></div>
<div class="vsel" style="left:701px;top:227px"></div>
<div class="vsel" style="left:801px;top:227px"></div>
<div class="vsel" style="left:901px;top:227px"></div>
<div class="vsel" style="left:1001px;top:227px"></div>
<div class="vsel" style="left:1101px;top:227px"></div>
<div id="hdr">
<div class="h l" style="left:0px;width:24px;padding-left:8px;font-weight:bold"><span class="sx" style="transform:scaleX(0.98)">#</span></div>
<div class="h l" style="left:24px;width:28px"></div>
<div class="h l" style="left:52px;width:132px"><span class="sx" style="transform:scaleX(0.887)">Name</span></div>
<div class="h l" style="left:184px;width:65px"><span class="sx" style="transform:scaleX(0.865)">Target</span></div>
<div class="h l" style="left:249px;width:70px"><span class="sx" style="transform:scaleX(0.86)">Rx Max Limit</span></div>
<div class="h l" style="left:319px;width:70px"><span class="sx" style="transform:scaleX(0.852)">Tx Max Limit</span></div>
<div class="h l" style="left:389px;width:113px"><span class="sx" style="transform:scaleX(0.912)">Packet Marks</span></div>
<div class="h l" style="left:502px;width:100px"><span class="sx" style="transform:scaleX(0.92)">Rx Avg. Rate</span></div>
<div class="h l" style="left:602px;width:100px"><span class="sx" style="transform:scaleX(0.908)">Tx Avg. Rate</span></div>
<div class="h l" style="left:702px;width:100px"><span class="sx" style="transform:scaleX(0.878)">Rx Queued Bytes</span><svg width="10" height="8" viewBox="0 0 10 8" style="position:absolute;right:0px;top:5px"><path d="M0.5 0.5L4.2 7" fill="none" stroke="#c6c6c6" stroke-width="1"/><path d="M9 0.5L4.8 7" fill="none" stroke="#fff" stroke-width="1"/><path d="M0 0.5H9" fill="none" stroke="#c6c6c6" stroke-width="1"/></svg></div>
<div class="h l" style="left:802px;width:100px"><span class="sx" style="transform:scaleX(0.879)">Tx Queued Bytes</span><svg width="10" height="8" viewBox="0 0 10 8" style="position:absolute;right:0px;top:5px"><path d="M0.5 0.5L4.2 7" fill="none" stroke="#c6c6c6" stroke-width="1"/><path d="M9 0.5L4.8 7" fill="none" stroke="#fff" stroke-width="1"/><path d="M0 0.5H9" fill="none" stroke="#c6c6c6" stroke-width="1"/></svg></div>
<div class="h l" style="left:902px;width:100px"><span class="sx" style="transform:scaleX(0.894)">Rx Dropped</span></div>
<div class="h l" style="left:1002px;width:100px"><span class="sx" style="transform:scaleX(0.88)">Tx Dropped</span></div>
<div class="h" style="left:1102px;width:200px;border-right:0"></div>
</div>
<div class="focus" style="left:0px;top:181px;width:1229px;height:16px;border-top:1px dotted #666;border-bottom:1px dotted #666;border-left:1px dotted #666"></div>
<div class="dot" style="left:824.3px;top:46.4px;width:16px;height:16px;background:radial-gradient(circle closest-side,rgba(236,28,24,.96) 0,rgba(240,34,30,.86) 18%,rgba(246,60,56,.5) 42%,rgba(250,100,100,.16) 68%,rgba(255,120,120,0) 100%)"></div>
<div class="dot" style="left:820.8px;top:59.3px;width:16px;height:16px;background:radial-gradient(circle closest-side,rgba(236,28,24,.96) 0,rgba(240,34,30,.86) 18%,rgba(246,60,56,.5) 42%,rgba(250,100,100,.16) 68%,rgba(255,120,120,0) 100%)"></div>
<div class="dot" style="left:818.3px;top:77.4px;width:16px;height:16px;background:radial-gradient(circle closest-side,rgba(236,28,24,.96) 0,rgba(240,34,30,.86) 18%,rgba(246,60,56,.5) 42%,rgba(250,100,100,.16) 68%,rgba(255,120,120,0) 100%)"></div>
<div class="dot" style="left:820.1px;top:94.6px;width:16px;height:16px;background:radial-gradient(circle closest-side,rgba(236,28,24,.96) 0,rgba(240,34,30,.86) 18%,rgba(246,60,56,.5) 42%,rgba(250,100,100,.16) 68%,rgba(255,120,120,0) 100%)"></div>
<div class="dot" style="left:819.6px;top:121.5px;width:16px;height:16px;background:radial-gradient(circle closest-side,rgba(236,28,24,.96) 0,rgba(240,34,30,.86) 18%,rgba(246,60,56,.5) 42%,rgba(250,100,100,.16) 68%,rgba(255,120,120,0) 100%)"></div>
<div class="dot" style="left:823.0px;top:137.1px;width:16px;height:16px;background:radial-gradient(circle closest-side,rgba(236,28,24,.96) 0,rgba(240,34,30,.86) 18%,rgba(246,60,56,.5) 42%,rgba(250,100,100,.16) 68%,rgba(255,120,120,0) 100%)"></div>
<div class="dot" style="left:820.9px;top:152.9px;width:16px;height:16px;background:radial-gradient(circle closest-side,rgba(236,28,24,.96) 0,rgba(240,34,30,.86) 18%,rgba(246,60,56,.5) 42%,rgba(250,100,100,.16) 68%,rgba(255,120,120,0) 100%)"></div>
</div>
<svg style="position:absolute;left:729px;top:341px" width="13" height="20" viewBox="0 0 13 20"><path d="M0.5 0.2v16l3.7-3.5 2.5 5.9 2.4-1-2.5-5.8h5.2z" fill="#fff" stroke="#000" stroke-width="1" stroke-linejoin="miter"/></svg>
</div>
</body></html>
